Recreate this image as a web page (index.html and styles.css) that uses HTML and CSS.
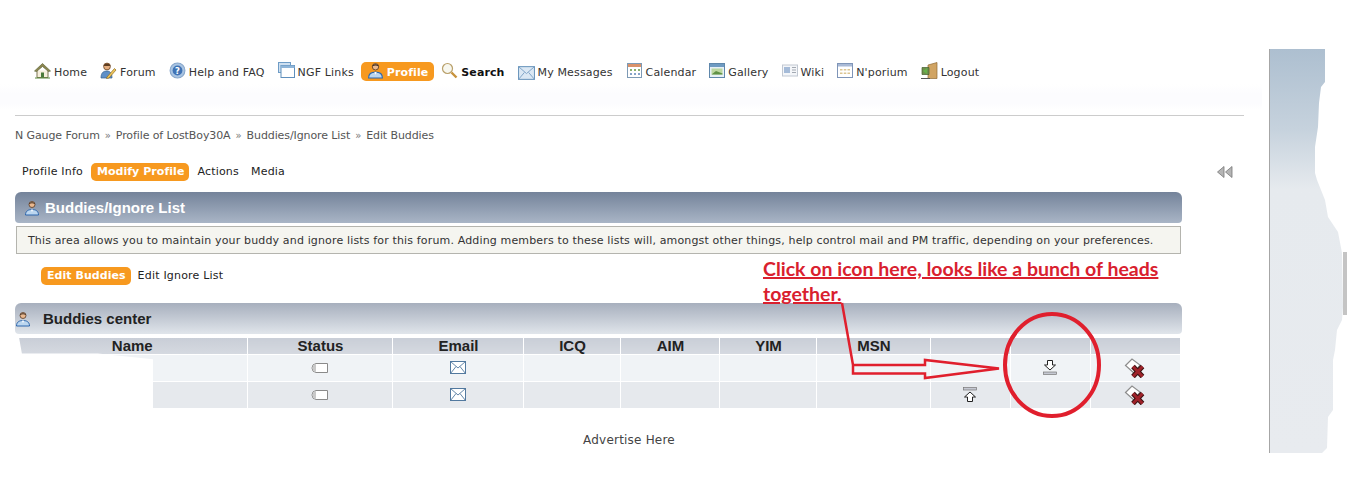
FILE: index.html
```html
<!DOCTYPE html>
<html lang="en">
<head>
<meta charset="utf-8">
<title>Buddies/Ignore List</title>
<link rel="stylesheet" href="styles.css">
</head>
<body>
<svg class="defs" width="0" height="0" aria-hidden="true">
  <symbol id="person" viewBox="0 0 16 16">
    <circle cx="8" cy="4.5" r="3" fill="#e9b88f" stroke="#5b3a22" stroke-width=".8"/>
    <path d="M5 4.2C5 1.5 11 1.5 11 4.2C9.5 3 6.5 3 5 4.2Z" fill="#3d2a1c"/>
    <path d="M1.5 15C1.5 10.5 5 9.5 8 9.5S14.5 10.5 14.5 15Z" fill="#bcd6ef" stroke="#2c66ad"/>
    <path d="M6.8 9.5L8 12L9.2 9.5Z" fill="#fff"/>
  </symbol>
  <symbol id="tag" viewBox="0 0 18 12">
    <path d="M5 1.5H16.5V10.5H5Q1 10 1 6T5 1.5Z" fill="#fff" stroke="#8a8a8a"/>
    <path d="M5 2V10Q1.5 9.5 1.5 6T5 2Z" fill="#c9c9c9"/>
  </symbol>
  <symbol id="mail" viewBox="0 0 16 13">
    <rect x=".5" y=".5" width="15" height="12" fill="#fff" stroke="#52799f"/>
    <path d="M.5 .5L8 7L15.5 .5M.5 12.5L6 5.5M15.5 12.5L10 5.5" fill="none" stroke="#52799f" stroke-width=".9"/>
  </symbol>
  <symbol id="del" viewBox="0 0 22 20">
    <path d="M1.500 7.500L8 1L16 7L10 15Z" fill="#fff" stroke="#8d8d8d" stroke-width="1.200"/>
    <path d="M9 8.500L18.500 18.500M18.500 8.500L9 18.500" stroke="#3a1212" stroke-width="5"/>
    <path d="M9 8.500L18.500 18.500M18.500 8.500L9 18.500" stroke="#9e2229" stroke-width="3"/>
  </symbol>
</svg>

<header class="band">
  <nav class="nav">
    <a class="nav-item"><svg class="ico" viewBox="0 0 17 16"><path d="M3 8V15H14V8" fill="#f6efdc" stroke="#7a7550"/><path d="M.5 8.5L8.5 1L16.5 8.5L14.5 9L8.5 4L2.5 9Z" fill="#8d8550" stroke="#5f6a3a" stroke-width=".7"/><rect x="7" y="10" width="3" height="5" fill="#4a7a3a"/><path d="M1 15.5H16" stroke="#5b8a3c"/></svg>Home</a>
    <a class="nav-item"><svg class="ico" viewBox="0 0 17 17"><circle cx="7" cy="4.5" r="3.4" fill="#e3ad7e" stroke="#6a4425" stroke-width=".8"/><path d="M3.5 4C4 .5 10 .5 10.500 4Z" fill="#5e3d20"/><path d="M1 16C1 10 4 9 7 9S12 11 12 16Z" fill="#5e8fc7" stroke="#34608f" stroke-width=".7"/><path d="M7 15L14.500 6.500L16 8L9 16L6.500 16.500Z" fill="#f0c65a" stroke="#8a6a22" stroke-width=".7"/></svg>Forum</a>
    <a class="nav-item"><svg class="ico" viewBox="0 0 16 16"><circle cx="8" cy="8" r="7" fill="#a9c4e2" stroke="#86a6cb"/><circle cx="8" cy="8" r="4.600" fill="#3f73b5"/><text x="8" y="11" class="ico-q">?</text></svg>Help and FAQ</a>
    <a class="nav-item"><svg class="ico" viewBox="0 0 17 17"><rect x=".5" y=".5" width="12" height="10" fill="#cfe0f0" stroke="#6e9cc6"/><rect x="3" y="3.500" width="13.500" height="12" fill="#fff" stroke="#5f8fbc"/><rect x="3" y="3.500" width="13.500" height="2.500" fill="#8fb5d8"/></svg>NGF Links</a>
    <a class="nav-item is-active"><svg class="ico" viewBox="0 0 16 16"><use href="#person"/></svg>Profile</a>
    <a class="nav-item is-bold"><svg class="ico" viewBox="0 0 17 17"><circle cx="6.500" cy="6.500" r="5" fill="#f7f7ef" stroke="#b9a06a" stroke-width="1.200"/><path d="M10.500 10.500L15.500 15.500" stroke="#c7923c" stroke-width="2.400"/></svg>Search</a>
    <a class="nav-item"><svg class="ico ico-low" viewBox="0 0 16 13"><rect x=".5" y=".5" width="15" height="12" fill="#dbe8f4" stroke="#6d97bd"/><path d="M.5 .5L8 7L15.500 .5M.5 12.500L6 6M15.500 12.500L10 6" fill="none" stroke="#7ea3c6" stroke-width=".9"/></svg>My Messages</a>
    <a class="nav-item"><svg class="ico" viewBox="0 0 17 17"><rect x="1.500" y="1.500" width="14" height="14" fill="#fff" stroke="#7d9ab5"/><rect x="2" y="2" width="13" height="3" fill="#d9926a"/><path d="M4 7h2v2H4zM8 7h2v2H8zM12 7h2v2h-2z" fill="#8ab06d"/><path d="M4 11h2v2H4zM8 11h2v2H8zM12 11h2v2h-2z" fill="#86a3c9"/></svg>Calendar</a>
    <a class="nav-item"><svg class="ico ico-16" viewBox="0 0 16 15"><rect x=".5" y=".5" width="15" height="14" fill="#e7f0f7" stroke="#5f87ab"/><rect x="1" y="1" width="14" height="3" fill="#6f9bc2"/><rect x="2.500" y="5.500" width="11" height="6" fill="#bcd7a0"/><path d="M2.500 11.500L7 8L13.500 10.500V11.500Z" fill="#5f9146"/></svg>Gallery</a>
    <a class="nav-item"><svg class="ico ico-16" viewBox="0 0 16 14"><rect x=".5" y="1.500" width="15" height="11" fill="#f4f6f9" stroke="#c1c8d2"/><rect x="2" y="3.500" width="6" height="6" fill="#a5bbd8"/><path d="M10 4h4M10 6.500h4M10 9h4" stroke="#a3a9b2"/></svg>Wiki</a>
    <a class="nav-item"><svg class="ico ico-16" viewBox="0 0 16 15"><rect x=".5" y=".5" width="15" height="14" fill="#fff" stroke="#7f95b8"/><rect x="1" y="1" width="14" height="2.500" fill="#a9bad6"/><path d="M3 6h2.500v1.500H3zM6.800 6h2.500v1.500H6.800zM10.500 6H13v1.500h-2.500zM3 9.500h2.500V11H3zM6.800 9.500h2.500V11H6.800zM10.500 9.500H13V11h-2.500z" fill="#dcc592"/></svg>N'porium</a>
    <a class="nav-item"><svg class="ico" viewBox="0 0 17 17"><path d="M7 3L16 .5V16.500H7Z" fill="#d1a463" stroke="#8f6a35" stroke-width=".7"/><path d="M1 5.500H8V12.500H1Z" fill="#6f8f4d" stroke="#44602c" stroke-width=".7"/><path d="M2 9L6 6V12Z" fill="#66b24a"/><path d="M0 16.500H9" stroke="#555"/></svg>Logout</a>
  </nav>
</header>

<main class="main">
  <hr class="rule">
  <p class="crumbs">N Gauge Forum<span class="sep">»</span>Profile of LostBoy30A<span class="sep">»</span>Buddies/Ignore List<span class="sep">»</span>Edit Buddies</p>

  <div class="tabs">
    <a class="tab">Profile Info</a>
    <a class="tab is-on">Modify Profile</a>
    <a class="tab">Actions</a>
    <a class="tab">Media</a>
    <svg class="collapse" viewBox="0 0 16 12"><path d="M7 .5V11.500L.5 6Z" fill="#b5b5b5" stroke="#777" stroke-width=".8"/><path d="M15 .5V11.500L8.500 6Z" fill="#b5b5b5" stroke="#777" stroke-width=".8"/></svg>
  </div>

  <div class="content">
    <h2 class="title-bar"><svg class="title-ico"><use href="#person"/></svg>Buddies/Ignore List</h2>
    <p class="desc">This area allows you to maintain your buddy and ignore lists for this forum. Adding members to these lists will, amongst other things, help control mail and PM traffic, depending on your preferences.</p>

    <div class="subtabs">
      <a class="tab is-on">Edit Buddies</a>
      <a class="tab">Edit Ignore List</a>
    </div>

    <h3 class="center-bar"><svg class="center-ico"><use href="#person"/></svg>Buddies center</h3>

    <table class="buddies">
      <colgroup>
        <col class="c-name"><col class="c-status"><col class="c-email"><col class="c-icq"><col class="c-aim"><col class="c-yim"><col class="c-msn"><col class="c-up"><col class="c-down"><col class="c-del">
      </colgroup>
      <thead>
        <tr><th>Name</th><th>Status</th><th>Email</th><th>ICQ</th><th>AIM</th><th>YIM</th><th>MSN</th><th></th><th></th><th></th></tr>
      </thead>
      <tbody>
        <tr>
          <td></td>
          <td><svg class="i-tag"><use href="#tag"/></svg></td>
          <td><svg class="i-mail"><use href="#mail"/></svg></td>
          <td></td><td></td><td></td><td></td><td></td>
          <td><svg class="i-move" viewBox="0 0 14 15"><path d="M4.500 .5H9.500V5H12.500L7 10L1.500 5H4.500Z" fill="#fff" stroke="#222"/><rect x=".5" y="12" width="13" height="2.500" fill="#c5c8d2" stroke="#777" stroke-width=".7"/></svg></td>
          <td><svg class="i-del"><use href="#del"/></svg></td>
        </tr>
        <tr>
          <td></td>
          <td><svg class="i-tag"><use href="#tag"/></svg></td>
          <td><svg class="i-mail"><use href="#mail"/></svg></td>
          <td></td><td></td><td></td><td></td>
          <td><svg class="i-move" viewBox="0 0 14 15"><rect x=".5" y=".5" width="13" height="2.500" fill="#c5c8d2" stroke="#777" stroke-width=".7"/><path d="M4.500 14.500H9.500V10H12.500L7 5L1.500 10H4.500Z" fill="#fff" stroke="#222"/></svg></td>
          <td></td>
          <td><svg class="i-del"><use href="#del"/></svg></td>
        </tr>
      </tbody>
    </table>
  </div>

  <p class="advert">Advertise Here</p>
</main>

<div class="erase"></div>
<aside class="strip"></aside>
<div class="scrap"></div>

<p class="note">Click on icon here, looks like a bunch of heads together.</p>
<svg class="markup" viewBox="0 0 1349 481" aria-hidden="true">
  <path class="mark" d="M842 303L853 365H925V360L999 368.500L925 378V373.500H853V365"/>
  <ellipse class="mark mark-ring" cx="1052" cy="365" rx="47" ry="51"/>
</svg>
</body>
</html>
```

FILE: styles.css
```css
* { box-sizing: border-box; }
html, body { margin: 0; height: 481px; overflow: hidden; background: #fff; }
body { position: relative; font: 11px/14px "DejaVu Sans", Verdana, sans-serif; letter-spacing: .15px; color: #333; }
.defs { position: absolute; }

.band { width: 1262px; height: 110px; padding: 62px 0 0 28px; background: linear-gradient(#fff 84px, #fcfcfe 94px, #fcfcfe 104px, #fff 110px); }
.nav { display: flex; gap: 1px; }
.nav-item { display: flex; align-items: center; gap: 3px; height: 19px; padding: 2px 6px 0; border-radius: 5px; white-space: nowrap; color: #333; }
.nav-item.is-active { background: #f7991f; color: #fff; font-weight: bold; letter-spacing: .1px; }
.nav-item.is-bold { font-weight: bold; color: #111; letter-spacing: .1px; }
.ico { width: 17px; height: 17px; margin-top: -5px; flex: none; }
.ico-16 { width: 16px; }
.ico-low { height: 14px; margin-top: 0; }
.ico-q { font: bold 8px "DejaVu Sans", sans-serif; fill: #fff; text-anchor: middle; }

.main { width: 1244px; padding-left: 15px; }
.rule { height: 1px; margin: 5px 0 0; border: 0; background: #ccc; }
.crumbs { margin: 13px 0 0; color: #555; letter-spacing: -.1px; }
.sep { margin: 0 5px; font-size: 10px; color: #777; }

.tabs { display: flex; align-items: center; height: 19px; margin-top: 19px; padding-left: 1px; }
.tab { height: 18px; padding: 0 6px; line-height: 18px; border-radius: 5px; color: #222; white-space: nowrap; letter-spacing: .2px; }
.tab.is-on { margin: 0 2px; padding: 0 5px 0 6px; background: #f7991f; color: #fff; font-weight: bold; letter-spacing: .05px; }
.collapse { width: 16px; height: 12px; margin-left: auto; margin-right: 11px; }

.content { width: 1167px; margin-top: 11px; }
.title-bar { display: flex; align-items: center; height: 31px; margin: 0; padding-left: 9px; border-radius: 6px 6px 4px 4px; background: linear-gradient(#74839a, #a9b5c6); font: bold 15px "Liberation Sans", Arial, sans-serif; letter-spacing: 0; color: #fff; }
.title-ico { width: 16px; height: 16px; margin-right: 5px; }
.desc { height: 28px; margin: 3px 1px 0; padding-left: 11px; border: 1px solid #b4b4ae; background: #f5f5f0; line-height: 27px; color: #333; white-space: nowrap; }

.subtabs { display: flex; height: 18px; margin-top: 13px; padding-left: 24px; }
.subtabs .is-on { margin-right: 1px; }

.center-bar { display: flex; align-items: center; height: 31px; margin: 18px 0 0; border-radius: 6px 6px 4px 4px; background: linear-gradient(#a7afbd, #e0e5eb); font: bold 15px "Liberation Sans", Arial, sans-serif; letter-spacing: 0; color: #222; }
.center-ico { width: 16px; height: 16px; margin-right: 12px; }

.buddies { width: 1164px; margin: 4px 0 0 1px; border-collapse: collapse; table-layout: fixed; letter-spacing: 0; }
.c-name { width: 231px; } .c-status { width: 145px; } .c-email { width: 131px; } .c-icq { width: 97px; } .c-aim { width: 99px; } .c-yim { width: 97px; } .c-msn { width: 114px; } .c-up { width: 80px; } .c-down { width: 80px; } .c-del { width: 90px; }
.buddies th { height: 16px; padding: 0 0 0 2px; border: 1px solid #fff; border-width: 0 1px 1px 0; background: linear-gradient(#c9ced7, #d5d9e0); font: bold 15px/15px "Liberation Sans", Arial, sans-serif; color: #222; }
.buddies td { height: 27px; padding: 0; border: 1px solid #fff; border-width: 0 1px 1px 0; text-align: center; vertical-align: middle; background: #f0f3f6; }
.buddies tbody tr:nth-child(2) td { background: #e6e9ed; }
.buddies th:last-child, .buddies td:last-child { border-right: 0; }
.i-tag { display: block; width: 18px; height: 12px; margin: 0 auto; }
.i-mail { display: block; width: 16px; height: 13px; margin: 0 auto; }
.i-move { display: block; width: 14px; height: 15px; margin: 0 auto; }
.i-del { display: block; width: 22px; height: 20px; margin: 0 auto; }

.advert { margin: 24px 0 0; width: 1228px; text-align: center; font-size: 12px; letter-spacing: .2px; color: #444; }

/* Pieces of the hand-edited screenshot lying over the page */
.erase { position: absolute; left: 15px; top: 338px; width: 138px; height: 71px; background: #fff; clip-path: polygon(0 0, 3% 0, 5% 22%, 60% 22%, 100% 30%, 100% 100%, 0 100%); }
.strip { position: absolute; left: 1269px; top: 49px; width: 75px; height: 404px; border-left: 1px solid #a6a6a6; background: linear-gradient(#adbfd0, #c6d2dd 80px, #e6eaee 140px, #e8ebef); clip-path: polygon(0 0, 56px 0, 56px 33px, 52px 38px, 50px 54px, 49px 78px, 46px 98px, 46px 124px, 48px 131px, 56px 151px, 59px 168px, 69px 183px, 73px 204px, 74px 258px, 73px 271px, 68px 281px, 66px 301px, 64px 311px, 64px 361px, 59px 368px, 58px 399px, 53px 404px, 0 404px); }
.scrap { position: absolute; left: 1343px; top: 252px; width: 4px; height: 63px; background: #c4c4c4; }
.note { position: absolute; left: 763px; top: 256px; width: 410px; margin: 0; font: bold 19.500px/25px "Lato", "Open Sans", sans-serif; letter-spacing: 0; color: #d9202e; text-decoration: underline; text-decoration-thickness: 2px; }
.markup { position: absolute; left: 0; top: 0; width: 1349px; height: 481px; pointer-events: none; }
.mark { fill: none; stroke: #e01f2d; stroke-width: 2.500; stroke-linejoin: miter; }
.mark-ring { stroke-width: 4; }
```
